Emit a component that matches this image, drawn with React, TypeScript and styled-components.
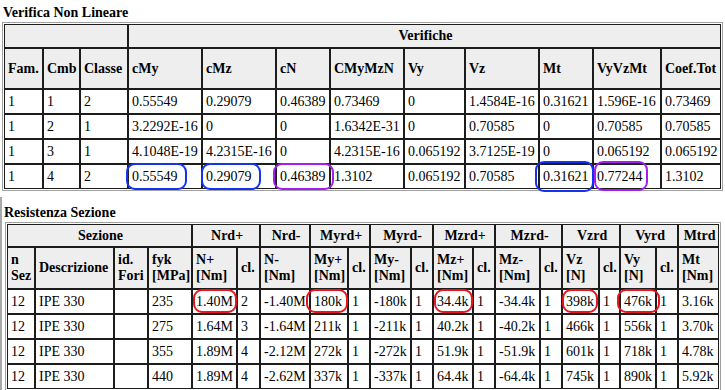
import styled, { createGlobalStyle } from "styled-components";

const GlobalStyle = createGlobalStyle`
  html, body {
    margin: 0;
    padding: 0;
    background: #ffffff;
  }
  body {
    font-family: "Liberation Serif", "Times New Roman", serif;
    font-size: 14px;
    color: #000000;
  }
`;

const Page = styled.div`
  width: 725px;
  height: 390px;
  overflow: hidden;
`;

const TopBlock = styled.div`
  padding: 5px 0 0 2px;
`;

const Section = styled.section`
  margin-top: 6px;
  border-left: 2px solid #a8a8a8;
  padding: 8px 0 0 2px;
  min-height: 200px;
`;

const Title = styled.h3<{ $ml: number }>`
  margin: 0 0 1px ${(p) => p.$ml}px;
  font-size: 14px;
  line-height: 16px;
  font-weight: bold;
`;

const Grid = styled.table<{ $ml: number }>`
  border: 1px solid #a0a0a0;
  border-collapse: separate;
  border-spacing: 0;
  padding: 1px;
  margin-left: ${(p) => p.$ml}px;
  font-size: 14px;
  line-height: 16px;
`;

const Row = styled.tr<{ $h: number }>`
  height: ${(p) => p.$h}px;
`;

const Head = styled.th<{ $w?: number; $center?: boolean }>`
  box-sizing: border-box;
  ${(p) => (p.$w ? `width: ${p.$w}px;` : "")}
  background: #eeeeee;
  border: 1px solid #1c1c1c;
  padding: 0 1px 0 3px;
  font-weight: bold;
  text-align: ${(p) => (p.$center ? "center" : "left")};
  vertical-align: middle;
  white-space: nowrap;
`;

const Cell = styled.td<{ $rel?: boolean }>`
  border: 1px solid #1c1c1c;
  padding: 0 1px 0 3px;
  white-space: nowrap;
  vertical-align: middle;
  position: ${(p) => (p.$rel ? "relative" : "static")};
`;

const Mark = styled.span<{ $c: string; $l: number; $t: number; $w: number; $h: number }>`
  position: absolute;
  box-sizing: border-box;
  left: ${(p) => p.$l}px;
  top: ${(p) => p.$t}px;
  width: ${(p) => p.$w}px;
  height: ${(p) => p.$h}px;
  border: 2px solid ${(p) => p.$c};
  border-radius: 9px;
  pointer-events: none;
  z-index: 1;
`;

const BLUE = "#1432f0";
const PURPLE = "#a31ff0";
const RED = "#e8141e";

interface MarkSpec {
  c: string;
  l: number;
  t: number;
  w: number;
  h: number;
}

const verHeads: [string, number][] = [
  ["Fam.", 39],
  ["Cmb", 37],
  ["Classe", 48],
  ["cMy", 74],
  ["cMz", 74],
  ["cN", 54],
  ["CMyMzN", 74],
  ["Vy", 61],
  ["Vz", 74],
  ["Mt", 54],
  ["VyVzMt", 68],
  ["Coef.Tot", 60],
];

const verRows: string[][] = [
  ["1", "1", "2", "0.55549", "0.29079", "0.46389", "0.73469", "0", "1.4584E-16", "0.31621", "1.596E-16", "0.73469"],
  ["1", "2", "1", "3.2292E-16", "0", "0", "1.6342E-31", "0", "0.70585", "0", "0.70585", "0.70585"],
  ["1", "3", "1", "4.1048E-19", "4.2315E-16", "0", "4.2315E-16", "0.065192", "3.7125E-19", "0", "0.065192", "0.065192"],
  ["1", "4", "2", "0.55549", "0.29079", "0.46389", "1.3102", "0.065192", "0.70585", "0.31621", "0.77244", "1.3102"],
];

const verMarks: Record<number, Record<number, MarkSpec>> = {
  3: {
    3: { c: BLUE, l: -3, t: -2, w: 61, h: 27 },
    4: { c: BLUE, l: -2, t: -2, w: 60, h: 27 },
    5: { c: PURPLE, l: -4, t: -2, w: 61, h: 27 },
    9: { c: BLUE, l: -5, t: -4, w: 59, h: 31 },
    10: { c: PURPLE, l: 0, t: -4, w: 54, h: 30 },
  },
};

const resGroups: [string, number][] = [
  ["Sezione", 4],
  ["Nrd+", 2],
  ["Nrd-", 1],
  ["Myrd+", 2],
  ["Myrd-", 2],
  ["Mzrd+", 2],
  ["Mzrd-", 2],
  ["Vzrd", 2],
  ["Vyrd", 2],
  ["Mtrd", 1],
];

const resHeads: [string[], number][] = [
  [["n", "Sez"], 28],
  [["Descrizione"], 79],
  [["id.", "Fori"], 34],
  [["fyk", "[MPa]"], 44],
  [["N+", "[Nm]"], 45],
  [["cl."], 23],
  [["N-", "[Nm]"], 50],
  [["My+", "[Nm]"], 38],
  [["cl."], 22],
  [["My-", "[Nm]"], 41],
  [["cl."], 22],
  [["Mz+", "[Nm]"], 40],
  [["cl."], 22],
  [["Mz-", "[Nm]"], 45],
  [["cl."], 22],
  [["Vz", "[N]"], 37],
  [["cl."], 21],
  [["Vy", "[N]"], 36],
  [["cl."], 22],
  [["Mt", "[Nm]"], 41],
];

const resRows: string[][] = [
  ["12", "IPE 330", "", "235", "1.40M", "2", "-1.40M", "180k", "1", "-180k", "1", "34.4k", "1", "-34.4k", "1", "398k", "1", "476k", "1", "3.16k"],
  ["12", "IPE 330", "", "275", "1.64M", "3", "-1.64M", "211k", "1", "-211k", "1", "40.2k", "1", "-40.2k", "1", "466k", "1", "556k", "1", "3.70k"],
  ["12", "IPE 330", "", "355", "1.89M", "4", "-2.12M", "272k", "1", "-272k", "1", "51.9k", "1", "-51.9k", "1", "601k", "1", "718k", "1", "4.78k"],
  ["12", "IPE 330", "", "440", "1.89M", "4", "-2.62M", "337k", "1", "-337k", "1", "64.4k", "1", "-64.4k", "1", "745k", "1", "890k", "1", "5.92k"],
];

const resMarks: Record<number, Record<number, MarkSpec>> = {
  0: {
    4: { c: RED, l: 0, t: -1, w: 44, h: 24 },
    7: { c: RED, l: -5, t: -1, w: 42, h: 24 },
    11: { c: RED, l: 0, t: -1, w: 39, h: 24 },
    15: { c: RED, l: -1, t: -1, w: 36, h: 24 },
    17: { c: RED, l: -4, t: -1, w: 43, h: 24 },
  },
};

function DataRow({ values, marks }: { values: string[]; marks?: Record<number, MarkSpec> }) {
  return (
    <Row $h={25}>
      {values.map((v, i) => {
        const m = marks?.[i];
        return (
          <Cell key={i} $rel={!!m}>
            {v}
            {m && <Mark $c={m.c} $l={m.l} $t={m.t} $w={m.w} $h={m.h} />}
          </Cell>
        );
      })}
    </Row>
  );
}

export default function App() {
  return (
    <Page>
      <GlobalStyle />
      <TopBlock>
        <Title $ml={1}>Verifica Non Lineare</Title>
        <Grid $ml={0}>
          <tbody>
            <Row $h={24}>
              <Head colSpan={3}></Head>
              <Head colSpan={9} $center>
                Verifiche
              </Head>
            </Row>
            <Row $h={41}>
              {verHeads.map(([t, w]) => (
                <Head key={t} $w={w}>
                  {t}
                </Head>
              ))}
            </Row>
            {verRows.map((r, i) => (
              <DataRow key={i} values={r} marks={verMarks[i]} />
            ))}
          </tbody>
        </Grid>
      </TopBlock>
      <Section>
        <Title $ml={0}>Resistenza Sezione</Title>
        <Grid $ml={1}>
          <tbody>
            <Row $h={23}>
              {resGroups.map(([t, span]) => (
                <Head key={t} colSpan={span} $center>
                  {t}
                </Head>
              ))}
            </Row>
            <Row $h={42}>
              {resHeads.map(([lines, w], i) => (
                <Head key={i} $w={w}>
                  {lines.map((l, j) => (
                    <span key={j}>
                      {j > 0 && <br />}
                      {l}
                    </span>
                  ))}
                </Head>
              ))}
            </Row>
            {resRows.map((r, i) => (
              <DataRow key={i} values={r} marks={resMarks[i]} />
            ))}
          </tbody>
        </Grid>
      </Section>
    </Page>
  );
}
